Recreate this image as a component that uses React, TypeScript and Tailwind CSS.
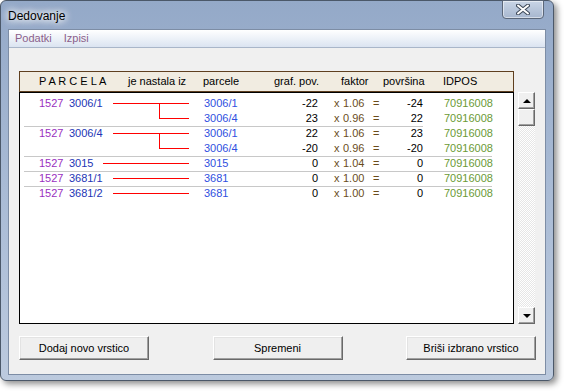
import React from "react";

type DataRow = { p: string; g: string; f: string; pov: string };

function DataCells({ p, g, f, pov }: DataRow) {
  return (
    <div className="flex items-center h-[15px] whitespace-nowrap">
      <span className="w-[60px] ml-[15px] text-[#2f4fe0]">{p}</span>
      <span className="w-[54px] text-right text-black">{g}</span>
      <span className="w-[9px] ml-[16px] text-[#6a4c1c]">x</span>
      <span className="w-[30px] text-[#6a4c1c]">{f}</span>
      <span className="w-[10px] text-[#6a4c1c]">=</span>
      <span className="w-[40px] text-right text-black">{pov}</span>
      <span className="ml-[21px] text-[#6b9a35]">70916008</span>
    </div>
  );
}

function Block({ name, rows }: { name: string; rows: DataRow[] }) {
  return (
    <div className="flex items-start">
      <div className="w-[30px] ml-[19px] h-[15px] flex items-center text-[#9a2fc0]">1527</div>
      <div className="w-[120px] flex flex-col">
        <div className="h-[15px] flex items-center">
          <span className="text-[#2335b5] whitespace-nowrap">{name}</span>
          <div className="flex-1 ml-[10px] h-px bg-[#ff0000]" />
        </div>
        {rows.length > 1 && (
          <div className="ml-[90px] w-[30px] h-[15px] -mt-[7px] border-l border-b border-[#ff0000]" />
        )}
      </div>
      <div className="flex flex-col">
        {rows.map((r, i) => (
          <DataCells key={i} {...r} />
        ))}
      </div>
    </div>
  );
}

function Sep({ long }: { long: boolean }) {
  return (
    <div
      className={
        "h-px -mb-px ml-[4px] bg-[#c8c8c8] " + (long ? "w-[468px]" : "w-[399px]")
      }
    />
  );
}

function ScrollBtn({ up }: { up: boolean }) {
  return (
    <div className="w-[17px] h-[17px] bg-[#f0f0f0] border-t border-l border-t-white border-l-white border-r border-b border-r-[#696969] border-b-[#696969] shadow-[inset_-1px_-1px_0_#a0a0a0] flex items-center justify-center">
      {up ? (
        <div className="w-0 h-0 border-l-[4px] border-r-[4px] border-b-[4px] border-l-transparent border-r-transparent border-b-black" />
      ) : (
        <div className="w-0 h-0 border-l-[4px] border-r-[4px] border-t-[4px] border-l-transparent border-r-transparent border-t-black" />
      )}
    </div>
  );
}

function WinButton({ label }: { label: string }) {
  return (
    <div className="w-[130px] h-[24px] bg-[#efefef] border-t border-l border-t-white border-l-white border-r border-b border-r-[#696969] border-b-[#696969] shadow-[inset_-1px_-1px_0_#a0a0a0,inset_1px_1px_0_#e3e3e3] flex items-center justify-center text-[11px] text-black">
      {label}
    </div>
  );
}

export default function App() {
  return (
    <div className="w-[567px] h-[392px] bg-white overflow-hidden font-['Liberation_Sans',Arial,sans-serif] text-[11px]">
      <div className="w-[554px] h-[381px] rounded-[6px] border border-[#4b5869] bg-gradient-to-b from-[#94a9c8] via-[#a9bbd5] to-[#bccade] shadow-[3px_3px_6px_rgba(0,0,0,0.45)] flex flex-col">
        <div className="h-[28px] flex items-start relative">
          <div className="mt-[8px] ml-[7px] text-[12px] leading-[14px] text-black [text-shadow:0_0_6px_#fff,0_0_8px_#fff,0_0_10px_#fff]">
            Dedovanje
          </div>
          <div className="absolute right-[9px] -top-px w-[42px] h-[19px] rounded-b-[4px] border border-[#5b6779] bg-gradient-to-b from-[#c9d5e6] to-[#a7b7cf] shadow-[inset_0_0_0_1px_rgba(255,255,255,0.5)] flex items-center justify-center">
            <svg width="14" height="11" viewBox="0 0 14 11">
              <path d="M2 1.5 L12 9.5 M12 1.5 L2 9.5" stroke="#3f4a5a" strokeWidth="4" strokeLinecap="round" />
              <path d="M2 1.5 L12 9.5 M12 1.5 L2 9.5" stroke="#ffffff" strokeWidth="2" strokeLinecap="round" />
            </svg>
          </div>
        </div>
        <div className="mx-[7px] h-[346px] border border-[#7d8da5] bg-[#f0f0f0] flex flex-col">
          <div className="h-[18px] bg-gradient-to-b from-white to-[#dbe4f1] border-b border-[#a9b6c9] flex items-center text-[#8b5f8b] text-[11px]">
            <span className="ml-[6px]">Podatki</span>
            <span className="ml-[12px]">Izpisi</span>
          </div>
          <div className="pl-[10px] pt-[23px] flex flex-col">
            <div className="flex items-start">
              <div className="w-[495px] flex flex-col">
                <div className="h-[21px] bg-[#f1ece1] border border-[#5f3f1f] flex items-center text-black whitespace-nowrap">
                  <span className="ml-[19px] w-[89px]">P A R C E L A</span>
                  <span className="w-[75px]">je nastala iz</span>
                  <span className="w-[71px]">parcele</span>
                  <span className="w-[67px]">graf. pov.</span>
                  <span className="w-[42px]">faktor</span>
                  <span className="w-[60px]">površina</span>
                  <span>IDPOS</span>
                </div>
                <div className="h-[232px] bg-white border border-black pt-[3px] flex flex-col">
                  <Block
                    name="3006/1"
                    rows={[
                      { p: "3006/1", g: "-22", f: "1.06", pov: "-24" },
                      { p: "3006/4", g: "23", f: "0.96", pov: "22" },
                    ]}
                  />
                  <Sep long={false} />
                  <Block
                    name="3006/4"
                    rows={[
                      { p: "3006/1", g: "22", f: "1.06", pov: "23" },
                      { p: "3006/4", g: "-20", f: "0.96", pov: "-20" },
                    ]}
                  />
                  <Sep long={true} />
                  <Block name="3015" rows={[{ p: "3015", g: "0", f: "1.04", pov: "0" }]} />
                  <Sep long={true} />
                  <Block name="3681/1" rows={[{ p: "3681", g: "0", f: "1.00", pov: "0" }]} />
                  <Sep long={true} />
                  <Block name="3681/2" rows={[{ p: "3681", g: "0", f: "1.00", pov: "0" }]} />
                </div>
              </div>
              <div className="ml-[4px] mt-[21px] w-[17px] h-[232px] flex flex-col">
                <ScrollBtn up={true} />
                <div className="w-[17px] h-[17px] bg-[#f0f0f0] border-t border-l border-t-white border-l-white border-r border-b border-r-[#696969] border-b-[#696969] shadow-[inset_-1px_-1px_0_#a0a0a0]" />
                <div className="flex-1 bg-[repeating-conic-gradient(#e6e6e6_0%_25%,#ffffff_0%_50%)] bg-[length:2px_2px]" />
                <ScrollBtn up={false} />
              </div>
            </div>
            <div className="mt-[12px] w-[517px] flex justify-between">
              <WinButton label="Dodaj novo vrstico" />
              <WinButton label="Spremeni" />
              <WinButton label="Briši izbrano vrstico" />
            </div>
          </div>
        </div>
      </div>
    </div>
  );
}
